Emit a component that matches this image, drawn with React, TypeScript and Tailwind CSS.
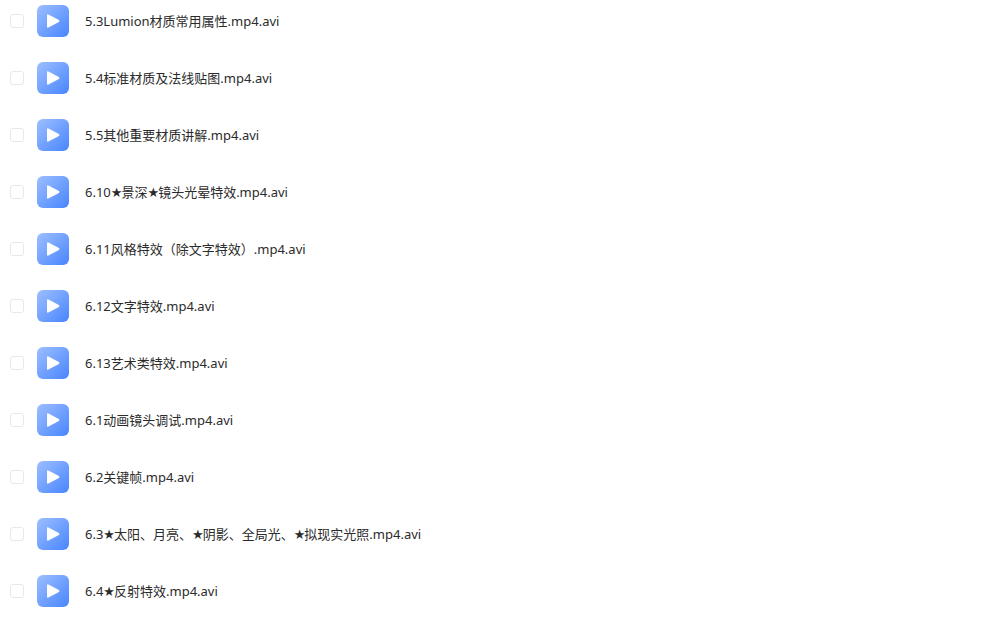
const files = [
  '5.3Lumion材质常用属性.mp4.avi',
  '5.4标准材质及法线贴图.mp4.avi',
  '5.5其他重要材质讲解.mp4.avi',
  '6.10★景深★镜头光晕特效.mp4.avi',
  '6.11风格特效（除文字特效）.mp4.avi',
  '6.12文字特效.mp4.avi',
  '6.13艺术类特效.mp4.avi',
  '6.1动画镜头调试.mp4.avi',
  '6.2关键帧.mp4.avi',
  '6.3★太阳、月亮、★阴影、全局光、★拟现实光照.mp4.avi',
  '6.4★反射特效.mp4.avi',
];

const App = () => {
  return (
    <div className="h-[618px] w-[998px] overflow-hidden bg-white pt-[5px] pl-[10px] font-['Noto_Sans','DejaVu_Sans','Noto_Sans_CJK_SC',sans-serif]">
      {files.map((name, index) => (
        <div key={index} className="mb-[25px] flex h-[32px] items-center">
          <div className="h-[14px] w-[14px] rounded-[3px] border border-[#e8e8e8] bg-white" />
          <div className="ml-[13px] flex h-[32px] w-[32px] items-center justify-center rounded-[6px] bg-gradient-to-br from-[#9dbeff] to-[#4784fd]">
            <svg width="14" height="16" viewBox="0 0 14 16">
              <path d="M2.4 1.5 L12.9 7 Q14 8 12.9 9 L2.4 14.5 Q1 15 1 13.8 L1 2.2 Q1 1 2.4 1.5 Z" fill="#fff" />
            </svg>
          </div>
          <span className="ml-[16px] pt-[2px] text-[13px] text-[#2b2b2b]">
            {name.split(/(★)/).map((part, i) =>
              part === '★' ? <span key={i} className="mr-[-1px]">★</span> : part
            )}
          </span>
        </div>
      ))}
    </div>
  );
};

export default App;
